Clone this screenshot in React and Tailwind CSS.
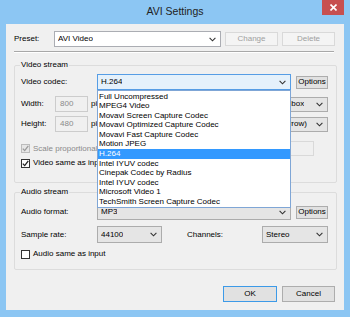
import React from "react";

const codecs = [
  "Full Uncompressed",
  "MPEG4 Video",
  "Movavi Screen Capture Codec",
  "Movavi Optimized Capture Codec",
  "Movavi Fast Capture Codec",
  "Motion JPEG",
  "H.264",
  "Intel IYUV codec",
  "Cinepak Codec by Radius",
  "Intel IYUV codec",
  "Microsoft Video 1",
  "TechSmith Screen Capture Codec",
];

function Chevron() {
  return (
    <svg width="7" height="5" viewBox="0 0 7 5" className="shrink-0">
      <path d="M0.6 0.8 L3.5 3.8 L6.4 0.8" fill="none" stroke="#333" strokeWidth="1.1" />
    </svg>
  );
}

function Combo({ value, className = "", kind = "list" }) {
  const look =
    kind === "edit"
      ? "bg-white border-[#abadb3]"
      : kind === "open"
      ? "bg-[#e5f1fb] border-[#569de5]"
      : "bg-[#e5e5e5] border-[#acacac]";
  return (
    <div className={`flex items-center justify-between border pl-[3px] pr-[4px] ${look} ${className}`}>
      <span className="truncate">{value}</span>
      <Chevron />
    </div>
  );
}

function Button({ children, className = "", disabled, primary }) {
  const look = disabled
    ? "bg-[#f4f4f4] border-[#d9d9d9] text-[#a0a0a0]"
    : primary
    ? "bg-[#e1e1e1] border-[#3c9ae8]"
    : "bg-[#e1e1e1] border-[#adadad]";
  return (
    <div className={`flex items-center justify-center border ${look} ${className}`}>{children}</div>
  );
}

function Check({ checked, disabled, label }) {
  return (
    <div className="flex items-center gap-[3px]">
      <div
        className={`w-[9px] h-[9px] border flex items-center justify-center ${
          disabled ? "border-[#bcbcbc] bg-[#e6e6e6]" : "border-[#333] bg-white"
        }`}
      >
        {checked && (
          <svg width="7" height="7" viewBox="0 0 7 7">
            <path
              d="M0.8 3.6 L2.7 5.6 L6.3 0.9"
              fill="none"
              stroke={disabled ? "#9a9a9a" : "#222"}
              strokeWidth="1.3"
            />
          </svg>
        )}
      </div>
      <span className={disabled ? "text-[#8a8a8a]" : ""}>{label}</span>
    </div>
  );
}

export default function App() {
  return (
    <div
      className="w-[350px] h-[317px] bg-[#8cc6f3] flex flex-col text-[8px] text-black overflow-hidden"
      style={{ fontFamily: '"Liberation Sans", Arial, sans-serif' }}
    >
      {/* title bar */}
      <div className="h-[24px] shrink-0 relative flex items-center justify-center">
        <span className="text-[10.5px] text-[#222] -mt-[1px]">AVI Settings</span>
        <div className="absolute right-[6px] top-0 w-[22px] h-[15px] bg-[#c74f4f] flex items-center justify-center">
          <svg width="7" height="7" viewBox="0 0 7 7">
            <path d="M0.5 0.5 L6.5 6.5 M6.5 0.5 L0.5 6.5" stroke="white" strokeWidth="1.6" />
          </svg>
        </div>
      </div>

      {/* client area */}
      <div className="mx-[6px] h-[286px] bg-[#f0f0f0] flex flex-col pl-[8px]">
        {/* preset row */}
        <div className="mt-[7px] h-[16px] flex items-center">
          <span className="w-[40px]">Preset:</span>
          <Combo value="AVI Video" kind="edit" className="w-[167px] h-[16px]" />
          <Button disabled className="ml-[4px] w-[53px] h-[14px]">Change</Button>
          <Button disabled className="ml-[4px] w-[53px] h-[14px]">Delete</Button>
        </div>
        <div className="mt-[4px] w-[320px] h-[2px] border-t border-[#a8a8a8] border-b border-b-white" />

        {/* video stream */}
        <fieldset className="mt-[7px] w-[323px] border border-[#dcdcdc] rounded-[2px] pl-[6px] pr-[8px] pb-[13px]">
          <legend className="px-[1px] leading-[10px] -ml-[1px]">Video stream</legend>
          <div className="mt-[4px] h-[16px] flex items-center">
            <span className="w-[76px]">Video codec:</span>
            <div className="relative">
              <Combo value="H.264" kind="open" className="w-[194px] h-[16px]" />
              <div className="absolute left-0 top-[16px] w-[194px] bg-white border border-[#7fa6d6] py-[0.5px] z-10">
                {codecs.map((c, i) => (
                  <div
                    key={i}
                    className={`h-[9.6px] leading-[9.6px] pl-[1px] whitespace-nowrap ${
                      c === "H.264" ? "bg-[#3399ff] text-white" : ""
                    }`}
                  >
                    {c}
                  </div>
                ))}
              </div>
            </div>
            <Button className="ml-[5px] w-[32px] h-[13px]">Options</Button>
          </div>
          <div className="mt-[6px] h-[16px] flex items-center">
            <span className="w-[34px]">Width:</span>
            <div className="w-[33px] h-[16px] border border-[#cccccc] bg-[#f0f0f0] text-[#8a8a8a] flex items-center pl-[4px]">800</div>
            <span className="ml-[3px]">pixels</span>
            <Combo value="Pad to box" className="ml-auto w-[66px] h-[15px]" />
          </div>
          <div className="mt-[4px] h-[16px] flex items-center">
            <span className="w-[34px]">Height:</span>
            <div className="w-[33px] h-[16px] border border-[#cccccc] bg-[#f0f0f0] text-[#8a8a8a] flex items-center pl-[4px]">480</div>
            <span className="ml-[3px]">pixels</span>
            <Combo value="Fit (narrow)" className="ml-auto w-[66px] h-[15px]" />
          </div>
          <div className="mt-[9px] h-[15px] flex items-center">
            <Check checked disabled label="Scale proportionally" />
            <div className="ml-auto mr-[14px] w-[52px] h-[15px] border border-[#d9d9d9] bg-[#f0f0f0]" />
          </div>
          <div className="mt-[1px] h-[12px] flex items-center">
            <Check checked label="Video same as input" />
          </div>
        </fieldset>

        {/* audio stream */}
        <fieldset className="mt-[4px] w-[323px] border border-[#dcdcdc] rounded-[2px] pl-[6px] pr-[8px] pb-[9px]">
          <legend className="px-[1px] leading-[10px] -ml-[1px]">Audio stream</legend>
          <div className="mt-[7px] h-[16px] flex items-center">
            <span className="w-[76px]">Audio format:</span>
            <Combo value="MP3" className="w-[194px] h-[16px]" />
            <Button className="ml-[5px] w-[32px] h-[13px]">Options</Button>
          </div>
          <div className="mt-[6px] h-[17px] flex items-center">
            <span className="w-[76px]">Sample rate:</span>
            <Combo value="44100" className="w-[65px] h-[17px]" />
            <span className="ml-[25px]">Channels:</span>
            <Combo value="Stereo" className="ml-auto w-[66px] h-[17px]" />
          </div>
          <div className="mt-[5px] h-[12px] flex items-center">
            <Check label="Audio same as input" />
          </div>
        </fieldset>

        {/* buttons */}
        <div className="mt-[16px] flex justify-end gap-[5px] pr-[9px]">
          <Button primary className="w-[54px] h-[16px]">OK</Button>
          <Button className="w-[53px] h-[16px]">Cancel</Button>
        </div>
      </div>
    </div>
  );
}
